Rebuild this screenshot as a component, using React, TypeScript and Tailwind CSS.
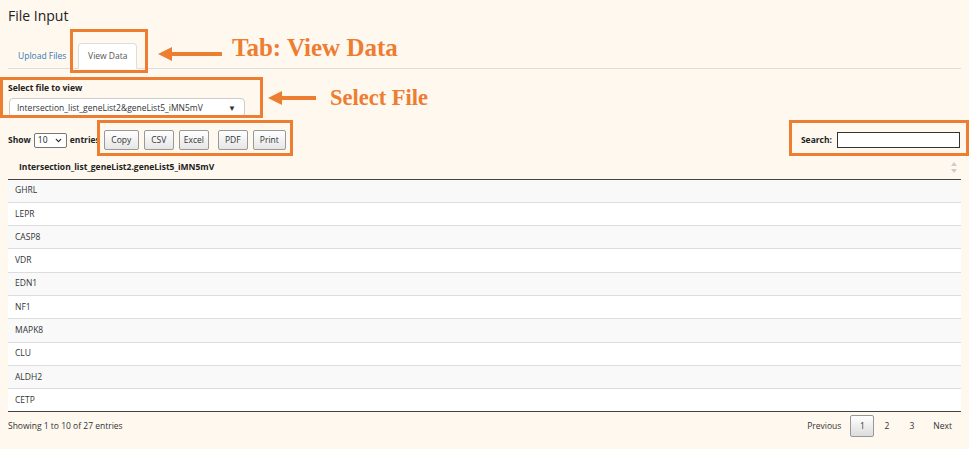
import { ChevronDown } from "lucide-react";

const genes = ["GHRL", "LEPR", "CASP8", "VDR", "EDN1", "NF1", "MAPK8", "CLU", "ALDH2", "CETP"];
const exportButtons = [
  { label: "Copy", cls: "w-[35px]" },
  { label: "CSV", cls: "w-[30px] ml-[5px]" },
  { label: "Excel", cls: "w-[30px] ml-[5px]" },
  { label: "PDF", cls: "w-[30px] ml-[9px]" },
  { label: "Print", cls: "w-[33px] ml-[5px]" },
];

// left-pointing annotation arrow
const Arrow = ({ width }: { width: number }) => (
  <svg width={width} height="16" viewBox={`0 0 ${width} 16`}>
    <polygon points={`0,8 14,1 14,15`} fill="#ed7d31" />
    <rect x="12" y="6" width={width - 12} height="4" fill="#ed7d31" />
  </svg>
);

const App = () => {
  return (
    <div
      className="relative w-full h-screen overflow-hidden bg-[#fef8ef] text-[#333] px-2"
      style={{ fontFamily: "'Open Sans', 'Noto Sans', sans-serif" }}
    >
      {/* Header */}
      <h2 className="pt-[5px] text-[14px] leading-[22px] text-[#222]">File Input</h2>

      {/* Tabs */}
      <div className="mt-[16px] flex items-end border-b border-[#ddd] pl-[1px] h-[26px] text-[8.5px]">
        <button className="px-[9px] h-[24px] text-[#337ab7]">Upload Files</button>
        <button className="ml-[3px] w-[59px] h-[26px] -mb-px bg-white border border-[#ddd] border-b-white rounded-t-[4px] text-[#555]">
          View Data
        </button>
      </div>

      {/* Select file */}
      <div className="mt-[13px]">
        <div className="text-[8.5px] font-bold leading-[12px] text-[#222]">Select file to view</div>
        <div className="mt-[4px] ml-px w-[236px] h-[20px] flex items-center justify-between bg-white border border-[#ccc] rounded-[4px] pl-[7px] pr-[8px] text-[8.5px] text-[#333]">
          <span>Intersection_list_geneList2&amp;geneList5_iMN5mV</span>
          <span className="text-[8px] text-[#333]">▼</span>
        </div>
      </div>

      {/* Controls */}
      <div className="mt-[11px] flex items-center justify-between h-[22px]">
        <div className="flex items-center text-[8.5px] font-bold text-[#222]">
          <span>Show</span>
          <div className="ml-[3px] mr-[3px] w-[33px] h-[15px] flex items-center justify-between border border-[#767676] rounded-[2px] bg-white px-[3px] font-normal">
            <span>10</span>
            <ChevronDown className="w-[9px] h-[9px]" strokeWidth={3} />
          </div>
          <span>entries</span>
          <div className="ml-[4px] flex items-center">
            {exportButtons.map((b) => (
              <button
                key={b.label}
                className={`h-[20px] font-normal text-[8.5px] text-[#333] border border-[#999] rounded-[2px] bg-gradient-to-b from-white to-[#e6e6e6] ${b.cls}`}
              >
                {b.label}
              </button>
            ))}
          </div>
        </div>
        <div className="flex items-center text-[8.5px] font-bold text-[#222] mr-[1px]">
          <span>Search:</span>
          <div className="ml-[5px] w-[123px] h-[16px] bg-white border-[1.5px] border-[#333]" />
        </div>
      </div>

      {/* Table */}
      <table className="mt-[6px] w-[953px] text-[8.5px] border-collapse">
        <thead>
          <tr className="h-[22px] border-b border-[#444]">
            <th className="text-left font-bold pl-[11px] text-[#222]">Intersection_list_geneList2.geneList5_iMN5mV</th>
            <th className="w-[10px] pr-[1px]">
              <svg width="6" height="11" viewBox="0 0 6 11">
                <polygon points="3,0 6,4 0,4" fill="#ccc" />
                <polygon points="3,11 6,7 0,7" fill="#ccc" />
              </svg>
            </th>
          </tr>
        </thead>
        <tbody>
          {genes.map((g, i) => (
            <tr
              key={g}
              className={`h-[23.3px] border-t border-[#ddd] first:border-t-0 ${i % 2 === 0 ? "bg-[#f9f9f9]" : "bg-white"}`}
            >
              <td className="pl-[7px]" colSpan={2}>
                {g}
              </td>
            </tr>
          ))}
        </tbody>
        <tfoot>
          <tr className="border-t border-[#444]">
            <td colSpan={2} />
          </tr>
        </tfoot>
      </table>

      {/* Footer */}
      <div className="mt-[3px] flex items-center justify-between text-[8.5px] text-[#333]">
        <span>Showing 1 to 10 of 27 entries</span>
        <div className="flex items-center mr-[9px]">
          <span className="px-[9px]">Previous</span>
          <span className="w-[24px] h-[22px] flex items-center justify-center border border-[#979797] rounded-[2px] bg-gradient-to-b from-white to-[#dcdcdc]">
            1
          </span>
          <span className="w-[25px] text-center">2</span>
          <span className="w-[25px] text-center">3</span>
          <span className="pl-[9px]">Next</span>
        </div>
      </div>

      {/* Annotations */}
      <div className="absolute left-[70px] top-[29px] w-[78px] h-[44px] border-[3px] border-[#ed7d31]" />
      <div className="absolute left-[158px] top-[46px]">
        <Arrow width={64} />
      </div>
      <div
        className="absolute left-[232px] top-[33px] text-[25px] font-bold text-[#ed7d31] leading-[30px]"
        style={{ fontFamily: "'Liberation Serif', serif" }}
      >
        Tab: View Data
      </div>

      <div className="absolute left-0 top-[77px] w-[263px] h-[41px] border-[3px] border-[#ed7d31]" />
      <div className="absolute left-[268px] top-[90px]">
        <Arrow width={48} />
      </div>
      <div
        className="absolute left-[330px] top-[84px] text-[22.5px] font-bold text-[#ed7d31] leading-[28px]"
        style={{ fontFamily: "'Liberation Serif', serif" }}
      >
        Select File
      </div>

      <div className="absolute left-[97px] top-[120px] w-[196px] h-[36px] border-[3px] border-[#ed7d31]" />
      <div className="absolute left-[789px] top-[120px] w-[180px] h-[36px] border-[3px] border-[#ed7d31]" />
    </div>
  );
};

export default App;
